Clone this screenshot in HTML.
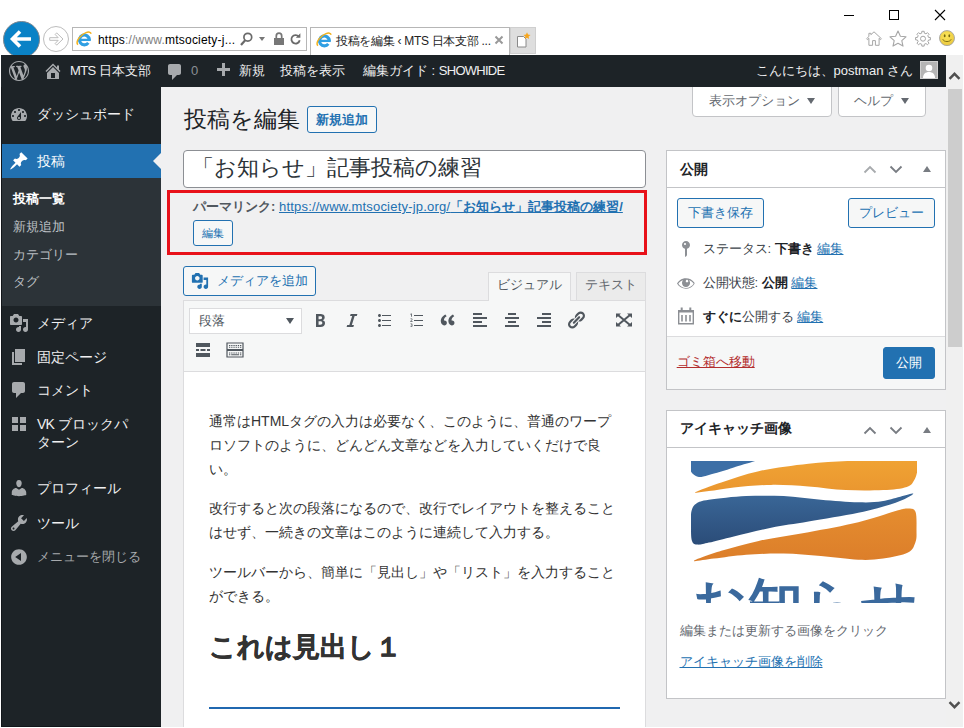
<!DOCTYPE html>
<html lang="ja">
<head>
<meta charset="utf-8">
<title>投稿を編集 ‹ MTS 日本支部</title>
<style>
*{box-sizing:border-box;margin:0;padding:0}
html,body{width:964px;height:728px;overflow:hidden;background:#fff}
body{position:relative;font-family:"Liberation Sans",sans-serif;font-size:13px;color:#3c434a}
.a{position:absolute;white-space:nowrap}
.t{position:absolute;white-space:nowrap;line-height:20px;height:20px}
svg{position:absolute;display:block;overflow:visible}
a,.lk{color:#2271b1;text-decoration:underline}
/* ---------- browser chrome ---------- */
#chrome{left:0;top:0;width:964px;height:55px;background:#fff}
/* ---------- admin bar ---------- */
#bar{left:1px;top:55px;width:945px;height:32px;background:#1d2327;color:#f0f0f1}
#bar .t{top:6px;font-size:13px;color:#f0f0f1}
/* ---------- sidebar ---------- */
#side{left:1px;top:87px;width:160px;height:640px;background:#1d2327;border-left:1px solid #12161a;border-bottom:1px solid #12161a}
#side .m{position:absolute;left:35px;font-size:14px;color:#f0f0f1;white-space:nowrap;line-height:20px}
#side .s{position:absolute;left:11px;font-size:13px;color:#bcc0c4;white-space:nowrap;line-height:20px}
#side svg{left:7px;width:20px;height:20px;fill:#a7aaad}
/* ---------- content ---------- */
#main{left:161px;top:87px;width:785px;height:640px;background:#f0f0f1;overflow:hidden}
.btn{position:absolute;border:1px solid #2271b1;border-radius:3px;background:#f6f7f7;color:#2271b1;font-size:13px;text-align:center;white-space:nowrap}
.box{position:absolute;background:#fff;border:1px solid #c3c4c7}
/* ---------- scrollbar ---------- */
#sb{left:946px;top:55px;width:17px;height:672px;background:#f0f0f0}
</style>
</head>
<body>
<!--CHROME-->
<div id="chrome" class="a">
<!-- back -->
<div class="a" style="left:2.500px;top:20.500px;width:37px;height:37px;border-radius:50%;background:#0a82c6;border:1px solid #7d8791"></div>
<svg style="left:9px;top:29px;width:24px;height:20px" viewBox="0 0 24 20"><path d="M22 10H4M11 2.500L3.500 10 11 17.500" fill="none" stroke="#fff" stroke-width="3.600"/></svg>
<!-- forward -->
<div class="a" style="left:43px;top:26px;width:26px;height:26px;border-radius:50%;background:#fff;border:1px solid #bdbdbd"></div>
<svg style="left:49px;top:32px;width:15px;height:14px" viewBox="0 0 15 14"><path d="M.700 5.700h8.500L6.200 2.500l1.500-1.600L14 7l-6.300 6.100-1.500-1.600 3-3.200H.700z" fill="#fff" stroke="#bdbdbd" stroke-width="1"/></svg>
<!-- address bar -->
<div class="a" style="left:72px;top:27px;width:235px;height:24px;border:1px solid #b6b6b6;background:#fff"></div>
<svg style="left:76px;top:31px;width:16px;height:16px" viewBox="0 0 16 16"><g><path d="M13.300 8.700A4.900 4.900 0 1 0 12.300 11.900" fill="none" stroke="#2f9fe3" stroke-width="3.100"/><path d="M4.500 8.900H14.800" stroke="#2f9fe3" stroke-width="2.300"/><path d="M1.800 13.800C-.800 10.400 4.500 3.600 10 1.600c2.700-1 4.700-.500 5.100 1.100" fill="none" stroke="#f2b21f" stroke-width="1.500"/></g></svg>
<div class="a" style="left:98px;top:32px;font-size:12px;line-height:16px;color:#000;letter-spacing:0.2px">https<span style="color:#808080">://www.</span>mtsociety-j...</div>
<svg style="left:240px;top:32px;width:13px;height:14px" viewBox="0 0 13 14"><circle cx="7.800" cy="5.200" r="3.900" fill="none" stroke="#6a6a6a" stroke-width="1.700"/><path d="M5.200 8.200L1 13" stroke="#6a6a6a" stroke-width="2.200"/></svg>
<div class="a" style="left:259px;top:37px;width:0;height:0;border:3.500px solid transparent;border-top:4px solid #777"></div>
<svg style="left:274px;top:32px;width:10px;height:13px" viewBox="0 0 10 13"><rect x="0" y="6" width="10" height="7" fill="#777"/><path d="M2.300 6V3.900a2.700 2.700 0 0 1 5.400 0V6" fill="none" stroke="#777" stroke-width="1.700"/></svg>
<svg style="left:290px;top:32px;width:12px;height:13px" viewBox="0 0 12 13"><path d="M8.800 4.600A4.200 4.200 0 1 0 9.700 8.200" fill="none" stroke="#6a6a6a" stroke-width="1.800"/><path d="M10.400 1.200v4.600H5.800z" fill="#6a6a6a"/></svg>
<!-- tab -->
<div class="a" style="left:310px;top:27px;width:200px;height:28px;border:1px solid #b6b6b6;border-bottom:0;background:#fff"></div>
<svg style="left:316px;top:32px;width:16px;height:16px" viewBox="0 0 16 16"><g><path d="M13.300 8.700A4.900 4.900 0 1 0 12.300 11.900" fill="none" stroke="#2f9fe3" stroke-width="3.100"/><path d="M4.500 8.900H14.800" stroke="#2f9fe3" stroke-width="2.300"/><path d="M1.800 13.800C-.800 10.400 4.500 3.600 10 1.600c2.700-1 4.700-.500 5.100 1.100" fill="none" stroke="#f2b21f" stroke-width="1.500"/></g></svg>
<div class="a" style="left:336px;top:33px;font-size:12px;line-height:16px;color:#222;letter-spacing:-0.3px">投稿を編集 ‹ MTS 日本支部 ...</div>
<svg style="left:495px;top:36px;width:8px;height:8px" viewBox="0 0 8 8"><path d="M.500.500l7 7M7.500.500l-7 7" stroke="#999" stroke-width="2"/></svg>
<!-- new tab -->
<div class="a" style="left:509.500px;top:27px;width:26.500px;height:27px;background:#dedede;border:1px solid #cfcfcf"></div>
<svg style="left:516px;top:32px;width:15px;height:16px" viewBox="0 0 15 16"><path d="M1.500 4.500h6l2.500 2.500V15h-8.500z" fill="#fff" stroke="#8a8a8a" stroke-width="1"/><path d="M11 .300l1 2.300 2.500.300-1.900 1.700.500 2.500L11 5.800 8.900 7.100l.500-2.500-1.900-1.700 2.500-.300z" fill="#f7a51c"/></svg>
<!-- window controls -->
<div class="a" style="left:844px;top:15px;width:10px;height:1px;background:#000"></div>
<div class="a" style="left:889px;top:10px;width:10px;height:10px;border:1px solid #000"></div>
<svg style="left:935px;top:10px;width:10px;height:10px" viewBox="0 0 10 10"><path d="M0 0l10 10M10 0L0 10" stroke="#000" stroke-width="1.100"/></svg>
<!-- home / star / gear / smiley -->
<svg style="left:866px;top:31px;width:16px;height:15px" viewBox="0 0 16 15"><path d="M8 .800L15.400 7.700l-.900.900-1.400-1.300v7H9.400V9.600H6.600v4.700H2.900v-7L1.500 8.600l-.900-.900L2.900 5.500V2.300h2v1.400z" fill="#fff" stroke="#a6a6a6" stroke-width="1" stroke-linejoin="round"/></svg>
<svg style="left:889px;top:30px;width:18px;height:17px" viewBox="0 0 18 17"><path d="M9 1l2.400 5.200 5.600.600-4.200 3.800 1.200 5.500L9 13.300 4 16.100l1.200-5.500L1 6.800l5.600-.600z" fill="#fff" stroke="#a6a6a6" stroke-width="1.100" stroke-linejoin="round"/></svg>
<svg style="left:915px;top:30.500px;width:16px;height:16px" viewBox="0 0 16 16"><path d="M13.55 6.41L15.41 6.53L15.41 8.87L13.55 8.99L12.84 10.72L14.07 12.11L12.41 13.77L11.02 12.54L9.29 13.25L9.17 15.11L6.83 15.11L6.71 13.25L4.98 12.54L3.59 13.77L1.93 12.11L3.16 10.72L2.45 8.99L0.59 8.87L0.59 6.53L2.45 6.41L3.16 4.68L1.93 3.29L3.59 1.63L4.98 2.86L6.71 2.15L6.83 0.29L9.17 0.29L9.29 2.15L11.02 2.86L12.41 1.63L14.07 3.29L12.84 4.68Z" fill="#fff" stroke="#a6a6a6" stroke-width="1" stroke-linejoin="round"/><circle cx="8" cy="7.700" r="2.500" fill="#fff" stroke="#a6a6a6" stroke-width="1"/></svg>
<svg style="left:939px;top:30px;width:16px;height:16px" viewBox="0 0 16 16"><defs><radialGradient id="sm" cx=".45" cy=".35" r=".7"><stop offset="0" stop-color="#fbe65a"/><stop offset="1" stop-color="#e9c53c"/></radialGradient></defs><circle cx="8" cy="8.100" r="7.500" fill="url(#sm)" stroke="#a4a4a4" stroke-width=".900"/><ellipse cx="5.700" cy="5.700" rx=".900" ry="1.500" fill="#76680f"/><ellipse cx="10.300" cy="5.700" rx=".900" ry="1.500" fill="#76680f"/><path d="M3.800 9.300c1.200 3 7.200 3 8.400 0" fill="none" stroke="#76680f" stroke-width=".900"/></svg>
</div>
<!--BAR-->
<div id="bar" class="a">
<svg style="left:8px;top:6px;width:20px;height:20px;fill:#a7aaad" viewBox="0 0 20 20"><path d="M20 10c0-5.510-4.490-10-10-10C4.480 0 0 4.490 0 10c0 5.520 4.480 10 10 10 5.510 0 10-4.480 10-10zM7.780 15.370L4.370 6.220c.550-.020 1.170-.080 1.170-.080.500-.060.440-1.130-.060-1.110 0 0-1.450.110-2.370.110-.180 0-.370 0-.580-.010C4.120 2.690 6.870 1.110 10 1.110c2.330 0 4.450.870 6.050 2.340-.680-.110-1.650.390-1.650 1.580 0 .740.450 1.360.900 2.100.350.610.550 1.360.550 2.460 0 1.490-1.400 5-1.400 5l-3.030-8.370c.540-.020.820-.170.820-.170.500-.050.440-1.250-.060-1.220 0 0-1.440.120-2.380.120-.870 0-2.330-.120-2.330-.120-.500-.030-.560 1.200-.060 1.220l.920.080 1.260 3.410zM17.410 10c.240-.640.740-1.870.430-4.250.700 1.290 1.050 2.710 1.050 4.250 0 3.290-1.730 6.240-4.400 7.780.970-2.590 1.940-5.200 2.920-7.780zM6.100 18.090C3.120 16.650 1.110 13.530 1.110 10c0-1.300.230-2.480.720-3.590C3.250 10.300 4.670 14.200 6.100 18.090zm4.030-6.630l2.580 6.980c-.860.290-1.760.450-2.710.450-.790 0-1.570-.110-2.290-.330.810-2.380 1.620-4.740 2.420-7.100z"/></svg>
<svg style="left:42px;top:6px;width:20px;height:20px;fill:#a7aaad" viewBox="0 0 20 20"><path d="M16 8.500l1.530 1.530-1.060 1.060L10 4.620l-6.470 6.470-1.060-1.060L10 2.500l4 4v-2h2v4zm-6-2.460l6 5.990V18H4v-5.970zM12 17v-5H8v5h4z"/></svg>
<div class="t" style="left:69px"><span style="letter-spacing:-0.6px">MTS</span> 日本支部</div>
<svg style="left:164px;top:7px;width:20px;height:20px;fill:#a7aaad" viewBox="0 0 20 20"><path d="M5 2h9c1.100 0 2 .900 2 2v7c0 1.100-.900 2-2 2h-2l-5 5v-5H5c-1.100 0-2-.900-2-2V4c0-1.100.900-2 2-2z"/></svg>
<div class="t" style="left:190px;color:#8c8f94">0</div>
<svg style="left:212px;top:6px;width:20px;height:20px;fill:#a7aaad" viewBox="0 0 20 20"><path d="M17 7v3h-5v5H9v-5H4V7h5V2h3v5h5z"/></svg>
<div class="t" style="left:238px">新規</div>
<div class="t" style="left:279px">投稿を表示</div>
<div class="t" style="left:362px">編集ガイド : <span style="letter-spacing:-0.75px">SHOWHIDE</span></div>
<div class="t" style="right:33px">こんにちは、postman さん</div>
<div class="a" style="left:919px;top:6px;width:18px;height:18px;background:#b5b5b5;border:1px solid #d0d0d0;overflow:hidden">
<svg style="left:0;top:0;width:16px;height:16px;fill:#fff" viewBox="0 0 16 16"><circle cx="8" cy="6" r="3.3"/><path d="M2 16c0-4 2.500-6 6-6s6 2 6 6z"/></svg></div>
</div>
<!--SIDE-->
<div id="side" class="a">
<svg style="top:18px" viewBox="0 0 20 20"><path d="M3.76 16h12.48c1.1-1.37 1.76-3.11 1.76-5 0-4.42-3.58-8-8-8s-8 3.58-8 8c0 1.89.66 3.63 1.76 5zM10 4c.55 0 1 .45 1 1s-.45 1-1 1-1-.45-1-1 .45-1 1-1zM6 6c.55 0 1 .45 1 1s-.45 1-1 1-1-.45-1-1 .45-1 1-1zm8 0c.55 0 1 .45 1 1s-.45 1-1 1-1-.45-1-1 .45-1 1-1zm-5.37 5.55L12 7v6c0 1.1-.9 2-2 2s-2-.9-2-2c0-.57.24-1.08.63-1.45zM4 10c.55 0 1 .45 1 1s-.45 1-1 1-1-.45-1-1 .45-1 1-1zm12 0c.55 0 1 .45 1 1s-.45 1-1 1-1-.45-1-1 .45-1 1-1zm-5 3c0-.55-.45-1-1-1s-1 .45-1 1 .45 1 1 1 1-.45 1-1z"/></svg>
<div class="m" style="top:17px">ダッシュボード</div>
<div class="a" style="left:0;top:57px;width:159px;height:34px;background:#2271b1"></div>
<div class="a" style="left:151px;top:66px;width:0;height:0;border:8px solid transparent;border-right-color:#f0f0f1;border-left-width:0"></div>
<svg style="top:64px;fill:#fff" viewBox="0 0 20 20"><path d="M10.44 3.02l1.82-1.82 6.36 6.35-1.83 1.82c-1.05-.68-2.48-.57-3.41.36l-.75.75c-.92.93-1.04 2.35-.35 3.41l-1.83 1.82-2.41-2.41-2.8 2.79c-.42.42-3.38 2.71-3.8 2.29s1.86-3.39 2.28-3.81l2.79-2.79L4.1 9.36l1.83-1.82c1.05.69 2.48.57 3.4-.36l.75-.75c.93-.92 1.05-2.35.36-3.41z"/></svg>
<div class="m" style="top:64px;color:#fff">投稿</div>
<div class="a" style="left:0;top:91px;width:159px;height:128px;background:#2c3338"></div>
<div class="s" style="top:102px;color:#fff;font-weight:bold">投稿一覧</div>
<div class="s" style="top:130px">新規追加</div>
<div class="s" style="top:158px">カテゴリー</div>
<div class="s" style="top:185px">タグ</div>
<svg style="top:226px" viewBox="0 0 20 20"><path d="M13 11V4c0-.55-.45-1-1-1h-1.670L9 1H5L3.670 3H2c-.550 0-1 .450-1 1v7c0 .550.450 1 1 1h10c.550 0 1-.450 1-1zM7 4.500c1.380 0 2.500 1.120 2.500 2.500S8.380 9.500 7 9.500 4.500 8.380 4.500 7 5.620 4.500 7 4.500zM14 6h5v10.500c0 1.380-1.120 2.500-2.500 2.500S14 17.880 14 16.500s1.120-2.500 2.500-2.500c.170 0 .340.020.500.050V9h-3V6zm-4 8.050V13h2v3.500c0 1.380-1.120 2.500-2.500 2.500S7 17.880 7 16.500 8.120 14 9.500 14c.170 0 .340.020.500.050z"/></svg>
<div class="m" style="top:226px">メディア</div>
<svg style="top:260px" viewBox="0 0 20 20"><path d="M6 15V2h10v13H6zm-1 1h8v2H3V5h2v11z"/></svg>
<div class="m" style="top:260px">固定ページ</div>
<svg style="top:293px" viewBox="0 0 20 20"><path d="M5 2h9c1.100 0 2 .900 2 2v7c0 1.100-.900 2-2 2h-2l-5 5v-5H5c-1.100 0-2-.900-2-2V4c0-1.100.900-2 2-2z"/></svg>
<div class="m" style="top:293px">コメント</div>
<svg style="top:327px" viewBox="0 0 20 20"><path d="M3 3h6v6H3zM11 3h6v6h-6zM3 11h6v6H3zM11 11h6v6h-6z"/></svg>
<div class="m" style="top:327px"><span style="letter-spacing:-0.8px">VK</span> ブロックパ</div>
<div class="m" style="top:345px">ターン</div>
<svg style="top:391px" viewBox="0 0 20 20"><path d="M10 9.250c-2.270 0-2.730-3.440-2.730-3.440C7 4.020 7.820 2 9.970 2c2.160 0 2.980 2.020 2.710 3.810 0 0-.410 3.440-2.680 3.440zm0 2.570L12.720 10c2.390 0 4.520 2.330 4.520 4.530v2.490s-3.650 1.130-7.240 1.130c-3.650 0-7.240-1.130-7.240-1.130v-2.490c0-2.250 1.940-4.480 4.470-4.480z"/></svg>
<div class="m" style="top:391px">プロフィール</div>
<svg style="top:426px" viewBox="0 0 20 20"><path d="M16.680 9.770c-1.340 1.340-3.300 1.670-4.950.990l-5.410 6.520c-.990.990-2.590.990-3.580 0s-.990-2.590 0-3.570l6.520-5.420c-.680-1.650-.350-3.610.990-4.950 1.280-1.280 3.120-1.620 4.720-1.060l-2.890 2.890 2.820 2.820 2.860-2.870c.530 1.580.180 3.390-1.080 4.650zM3.810 16.210c.400.390 1.040.390 1.430 0 .400-.400.400-1.040 0-1.430-.390-.400-1.030-.400-1.430 0-.390.390-.390 1.030 0 1.430z"/></svg>
<div class="m" style="top:426px">ツール</div>
<svg style="top:460px" viewBox="0 0 20 20"><path d="M10 2.160c4.330 0 7.840 3.510 7.840 7.840s-3.510 7.840-7.840 7.840S2.160 14.330 2.160 10 5.670 2.160 10 2.160zm2 11.720V6.120L6.180 9.970z"/></svg>
<div class="m" style="top:460px;font-size:13px;color:#a7aaad">メニューを閉じる</div>
</div>
<!--MAIN-->
<div id="main" class="a">
<!-- screen meta -->
<div class="a" style="left:531px;top:-1px;width:140px;height:30.500px;background:#fff;border:1px solid #c3c4c7;border-radius:0 0 4px 4px"></div>
<div class="t" style="left:548px;top:4px;color:#646970">表示オプション</div>
<div class="a" style="left:646px;top:11px;width:0;height:0;border:4.500px solid transparent;border-top:6px solid #646970"></div>
<div class="a" style="left:677px;top:-1px;width:88px;height:30.500px;background:#fff;border:1px solid #c3c4c7;border-radius:0 0 4px 4px"></div>
<div class="t" style="left:693px;top:4px;color:#646970">ヘルプ</div>
<div class="a" style="left:740px;top:11px;width:0;height:0;border:4.500px solid transparent;border-top:6px solid #646970"></div>
<!-- heading -->
<div class="a" style="left:22.500px;top:17px;font-size:23px;line-height:30px;color:#1d2327">投稿を編集</div>
<div class="btn" style="left:146px;top:19px;width:70px;height:27px;line-height:25px;font-weight:bold">新規追加</div>
<!-- title -->
<div class="a" style="left:22px;top:63px;width:463px;height:38px;background:#fff;border:1px solid #8c8f94;border-radius:4px"></div>
<div class="a" style="left:31px;top:65px;font-size:22px;line-height:32px;color:#2c3338">「お知らせ」記事投稿の練習</div>
<!-- red box -->
<div class="a" style="left:6px;top:103px;width:480px;height:65px;border:3px solid #e8111a"></div>
<div class="t" style="left:32px;top:110px;color:#50575e"><b>パーマリンク:</b> <span class="lk"><span style="letter-spacing:.2px">https://www.mtsociety-jp.org/</span><b>「お知らせ」記事投稿の練習/</b></span></div>
<div class="btn" style="left:32px;top:133px;width:40px;height:26px;line-height:24px;font-size:11px">編集</div>
<!-- media button -->
<div class="btn" style="left:22px;top:179px;width:133px;height:30px"></div>
<svg style="left:30px;top:185px;width:18px;height:18px;fill:#2271b1" viewBox="0 0 20 20"><path d="M13 11V4c0-.55-.45-1-1-1h-1.670L9 1H5L3.670 3H2c-.550 0-1 .450-1 1v7c0 .550.450 1 1 1h10c.550 0 1-.450 1-1zM7 4.500c1.380 0 2.500 1.120 2.500 2.500S8.380 9.500 7 9.500 4.500 8.380 4.500 7 5.620 4.500 7 4.500zM14 6h5v10.500c0 1.380-1.120 2.500-2.500 2.500S14 17.880 14 16.500s1.120-2.500 2.500-2.500c.170 0 .340.020.500.050V9h-3V6zm-4 8.050V13h2v3.500c0 1.380-1.120 2.500-2.500 2.500S7 17.880 7 16.500 8.120 14 9.500 14c.170 0 .340.020.500.050z"/></svg>
<div class="t" style="left:56px;top:184px;color:#2271b1">メディアを追加</div>
<!-- tabs -->
<div class="a" style="left:415px;top:185px;width:70px;height:29px;background:#ebebeb;border:1px solid #dcdcde"></div>
<div class="t" style="left:424px;top:188px;color:#646970">テキスト</div>
<!-- editor -->
<div class="a" style="left:22px;top:213px;width:463px;height:440px;background:#fff;border:1px solid #dcdcde"></div>
<div class="a" style="left:23px;top:214px;width:461px;height:71px;background:#f6f7f7;border-bottom:1px solid #dcdcde"></div>
<div class="a" style="left:327px;top:185px;width:83px;height:29px;background:#f6f7f7;border:1px solid #dcdcde;border-bottom:0"></div>
<div class="t" style="left:336px;top:188px;color:#50575e">ビジュアル</div>
<div class="a" style="left:28px;top:221px;width:113px;height:26px;background:#fff;border:1px solid #dcdcde"></div>
<div class="t" style="left:38px;top:224px;color:#50575e">段落</div>
<div class="a" style="left:125px;top:231px;width:0;height:0;border:4.500px solid transparent;border-top:6px solid #50575e"></div>
<svg style="left:149px;top:223px;width:20px;height:20px;fill:#50575e" viewBox="0 0 20 20"><path d="M6 4v13h4.540c1.370 0 2.460-.330 3.260-1 .800-.660 1.200-1.580 1.200-2.770 0-.840-.170-1.510-.510-2.010s-.900-.850-1.670-1.030v-.090c.570-.100 1.020-.400 1.360-.900s.510-1.130.510-1.910c0-1.140-.390-1.980-1.170-2.500C12.750 4.260 11.500 4 9.780 4H6zm2.570 5.150V6.260h1.360c.730 0 1.270.110 1.610.320.340.220.510.580.510 1.070 0 .540-.160.920-.470 1.150s-.820.350-1.510.350h-1.500zm0 2.190h1.600c1.440 0 2.160.530 2.160 1.610 0 .600-.170 1.050-.510 1.340s-.860.430-1.570.430H8.570v-3.380z"/></svg>
<svg style="left:181px;top:223px;width:20px;height:20px;fill:#50575e" viewBox="0 0 20 20"><path d="M14.780 6h-2.130l-2.800 9h2.120l-.620 2H4.600l.620-2h2.140l2.800-9H8.030l.620-2h6.750z"/></svg>
<svg style="left:213px;top:223px;width:20px;height:20px;fill:#50575e" viewBox="0 0 20 20"><path d="M5.500 7C4.670 7 4 6.330 4 5.500 4 4.680 4.670 4 5.500 4 6.320 4 7 4.680 7 5.500 7 6.330 6.320 7 5.500 7zM8 5h9v1H8V5zm-2.500 7c-.830 0-1.500-.670-1.500-1.500C4 9.680 4.670 9 5.500 9c.820 0 1.500.680 1.500 1.500 0 .830-.680 1.500-1.500 1.500zM8 10h9v1H8v-1zm-2.500 7c-.830 0-1.500-.670-1.500-1.500 0-.820.670-1.500 1.500-1.500.820 0 1.500.680 1.500 1.500 0 .830-.680 1.500-1.500 1.500zM8 15h9v1H8v-1z"/></svg>
<svg style="left:245px;top:223px;width:20px;height:20px;fill:#50575e" viewBox="0 0 20 20"><path d="M8 5h9v1H8zM8 10h9v1H8zM8 15h9v1H8z"/><path d="M5 3.500h.8v3.300H5V4.500l-.6.200V4zM4.300 8.800c.3-.3.700-.4 1.100-.4.700 0 1.100.4 1.100.9 0 .600-.500 1-1.300 1.700h1.400v.700H4.200v-.600c.900-.800 1.500-1.300 1.500-1.700 0-.200-.100-.400-.400-.400-.200 0-.400.100-.600.300zM4.300 13.800c.3-.200.700-.400 1.100-.400.700 0 1.100.300 1.100.800 0 .400-.200.600-.500.700.400.100.600.400.600.800 0 .600-.500 1-1.300 1-.400 0-.900-.100-1.100-.400l.300-.500c.200.200.500.300.800.300s.500-.100.500-.400c0-.300-.200-.400-.700-.400h-.200v-.600h.200c.400 0 .600-.100.600-.400 0-.200-.200-.300-.400-.300-.300 0-.500.100-.700.300z"/></svg>
<svg style="left:277px;top:223px;width:20px;height:20px;fill:#50575e" viewBox="0 0 20 20"><path d="M8.540 12.740c0-.870-.240-1.610-.720-2.220-.730-.920-2.140-1.030-2.960-.850-.340-1.930 1.300-4.390 3.420-5.450L6.650 1.940C3.450 3.460.310 6.960.850 11.370 1.190 14.160 2.950 16 5.120 16c.950 0 1.760-.310 2.420-.930s1-1.390 1-2.330zm9.730 0c0-.870-.240-1.610-.720-2.220-.730-.920-2.140-1.030-2.960-.850-.340-1.930 1.300-4.390 3.420-5.450l-1.630-2.280c-3.200 1.520-6.340 5.020-5.800 9.430.340 2.790 2.100 4.630 4.270 4.630.950 0 1.760-.310 2.420-.930s1-1.390 1-2.330z" transform="translate(2.200 3) scale(.78)"/></svg>
<svg style="left:309px;top:223px;width:20px;height:20px;fill:#50575e" viewBox="0 0 20 20"><path d="M12 5V3H3v2h9zm5 4V7H3v2h14zm-5 4v-2H3v2h9zm5 4v-2H3v2h14z"/></svg>
<svg style="left:341px;top:223px;width:20px;height:20px;fill:#50575e" viewBox="0 0 20 20"><path d="M14 5V3H6v2h8zm3 4V7H3v2h14zm-3 4v-2H6v2h8zm3 4v-2H3v2h14z"/></svg>
<svg style="left:373px;top:223px;width:20px;height:20px;fill:#50575e" viewBox="0 0 20 20"><path d="M17 5V3H8v2h9zm0 4V7H3v2h14zm0 4v-2H8v2h9zm0 4v-2H3v2h14z"/></svg>
<svg style="left:405px;top:223px;width:20px;height:20px;fill:#50575e" viewBox="0 0 20 20"><path d="M17.740 2.760c1.680 1.690 1.680 4.410 0 6.100l-1.530 1.520c-1.120 1.120-2.700 1.470-4.140 1.090l2.620-2.610.760-.770.760-.760c.840-.840.840-2.200 0-3.040-.840-.850-2.200-.850-3.040 0l-.770.760-3.380 3.380c-.370-1.440-.020-3.020 1.100-4.140l1.520-1.530c1.690-1.680 4.420-1.680 6.100 0zM8.590 13.430l5.340-5.340c.420-.420.420-1.100 0-1.520-.440-.430-1.130-.390-1.530 0l-5.330 5.340c-.420.420-.420 1.100 0 1.520.440.430 1.130.390 1.520 0zm-.760 2.290l4.140-4.150c.380 1.440.030 3.020-1.090 4.140l-1.520 1.530c-1.690 1.680-4.410 1.680-6.100 0-1.680-1.680-1.680-4.420 0-6.100l1.530-1.520c1.120-1.120 2.700-1.470 4.140-1.100l-4.140 4.150c-.850.840-.850 2.200 0 3.050.840.840 2.200.840 3.040 0z"/></svg>
<svg style="left:453px;top:223px;width:20px;height:20px;fill:#50575e" viewBox="0 0 20 20"><path d="M4 5l12 10M16 5L4 15" fill="none" stroke="#50575e" stroke-width="2"/><path d="M2 3.500h5L2 8zM18 3.500h-5l5 4.500zM2 16.500h5L2 12zM18 16.500h-5l5-4.500z"/></svg>
<svg style="left:32px;top:253px;width:20px;height:20px;fill:#50575e" viewBox="0 0 20 20"><path d="M3 3h14v4H3zM3 9h3v2H3zM7.500 9h5v2h-5zM14 9h3v2h-3zM3 13h14v4H3z"/></svg>
<svg style="left:64px;top:253px;width:20px;height:20px;fill:#50575e" viewBox="0 0 20 20"><path d="M2 3h16v6.500H2zM2 10.500h16V17H2z" fill="none" stroke="#50575e" stroke-width="1.200"/><path d="M4 5h1.300v1H4zM6.200 5h1.300v1H6.200zM8.400 5h1.300v1H8.400zM10.600 5h1.300v1h-1.300zM12.800 5h1.300v1h-1.300zM15 5h1.300v1H15zM4 6.800h1.300v1H4zM6.200 6.800h1.300v1H6.200zM8.400 6.800h1.300v1H8.400zM10.600 6.800h1.300v1h-1.300zM12.800 6.800h1.300v1h-1.300zM15 6.800h1.300v1H15zM4 12.500h1.300v1H4zM6.200 12.500h1.300v1H6.200zM8.400 12.500h1.300v1H8.400zM10.600 12.500h1.300v1h-1.300zM12.800 12.500h1.300v1h-1.300zM15 12.500h1.300v1H15zM4 14.300h1.300v1H4zM6.200 14.300h7.900v1H6.200zM15 14.300h1.300v1H15z"/></svg>

<div class="a" style="left:48px;top:323px;font-size:14px;line-height:23.800px;color:#333">通常はHTMLタグの入力は必要なく、このように、普通のワープ<br>ロソフトのように、どんどん文章などを入力していくだけで良<br>い。</div>
<div class="a" style="left:48px;top:410px;font-size:14px;line-height:23.800px;color:#333">改行すると次の段落になるので、改行でレイアウトを整えること<br>はせず、一続きの文章はこのように連続して入力する。</div>
<div class="a" style="left:48px;top:474px;font-size:14px;line-height:23.800px;color:#333">ツールバーから、簡単に「見出し」や「リスト」を入力すること<br>ができる。</div>
<div class="a" style="left:48px;top:540px;font-size:27.400px;line-height:40px;font-weight:bold;color:#333;-webkit-text-stroke:.5px #333">これは見出し１</div>
<div class="a" style="left:48px;top:620px;width:411px;height:2px;background:#2068b0"></div>

<div class="box" style="left:505px;top:63px;width:280px;height:240px"></div>
<div class="a" style="left:506px;top:100px;width:278px;height:1px;background:#c3c4c7"></div>
<div class="t" style="left:518.5px;top:71.5px;font-size:14px;font-weight:bold;color:#1d2327">公開</div>
<svg style="left:702.3px;top:78px;width:14px;height:9px" viewBox="0 0 14 9"><path d="M1.500 7.500L7 2l5.500 5.500" fill="none" stroke="#a7aaad" stroke-width="1.800"/></svg>
<svg style="left:728px;top:78px;width:14px;height:9px" viewBox="0 0 14 9"><path d="M1.500 1.500L7 7l5.500-5.500" fill="none" stroke="#787c82" stroke-width="1.800"/></svg>
<div class="a" style="left:762.4px;top:79px;width:0;height:0;border:4px solid transparent;border-bottom:6px solid #787c82;border-top:0"></div>
<div class="btn" style="left:516px;top:111px;width:87px;height:30px;line-height:28px">下書き保存</div>
<div class="btn" style="left:687px;top:111px;width:87px;height:30px;line-height:28px">プレビュー</div>
<svg style="left:515px;top:152px;width:20px;height:20px;fill:#8c8f94" viewBox="0 0 20 20"><path d="M14 6c0 1.860-1.280 3.410-3 3.860V16c0 1-2 2-2 2V9.860c-1.720-.450-3-2-3-3.860 0-2.210 1.790-4 4-4s4 1.790 4 4zM8 5c0 .550.450 1 1 1s1-.450 1-1-.450-1-1-1-1 .450-1 1z"/></svg>
<div class="t" style="left:541.6px;top:151.5px">ステータス: <b style="color:#1d2327">下書き</b> <span class="lk">編集</span></div>
<svg style="left:515px;top:185.5px;width:20px;height:20px;fill:#8c8f94" viewBox="0 0 20 20"><path d="M18.300 9.500C15 4.900 8.500 3.800 3.900 7.200c-1.200.900-2.200 2.100-2.900 3.400 2.800 4.900 8.900 6.600 13.700 3.900 1.600-.900 3-2.300 3.900-3.900-.100-.400-.200-.700-.300-1.100zM10.100 7.200c.500-.500 1.300-.500 1.800 0s.500 1.300 0 1.800-1.300.500-1.800 0-.500-1.300 0-1.800zm-.100 7.700c-3.100 0-6-1.600-7.700-4.200C3.500 9 5.100 7.800 7 7.200c-.700.800-1 1.700-1 2.700 0 2.200 1.700 4.100 4 4.100 2.200 0 4.100-1.700 4.100-4v-.100c0-1-.400-2-1.100-2.700 1.900.600 3.500 1.800 4.700 3.500-1.700 2.600-4.600 4.200-7.700 4.200z"/></svg>
<div class="t" style="left:541.6px;top:185.5px">公開状態: <b style="color:#1d2327">公開</b> <span class="lk">編集</span></div>
<svg style="left:515px;top:218.5px;width:20px;height:20px" viewBox="0 0 20 20"><path d="M2.700 4.700h14.600v13.100H2.700z" fill="none" stroke="#8c8f94" stroke-width="1.400"/><path d="M2.700 4.500h14.600v2H2.700z" fill="#8c8f94"/><path d="M5.700 1.500v4M14.300 1.500v4" fill="none" stroke="#8c8f94" stroke-width="2"/><path d="M6 9v6.500M10 9v6.500M14 9v6.500" fill="none" stroke="#8c8f94" stroke-width="1.600"/></svg>
<div class="t" style="left:541.6px;top:219.5px"><b style="color:#1d2327">すぐに</b>公開する <span class="lk">編集</span></div>
<div class="a" style="left:506px;top:249px;width:278px;height:53px;background:#f6f7f7;border-top:1px solid #dcdcde"></div>
<div class="t" style="left:515.7px;top:264.5px;color:#b32d2e;text-decoration:underline">ゴミ箱へ移動</div>
<div class="btn" style="left:722px;top:260.4px;width:52px;height:32px;line-height:30px;background:#2271b1;color:#fff">公開</div>
<div class="box" style="left:505px;top:323px;width:280px;height:289px"></div>
<div class="a" style="left:506px;top:360px;width:278px;height:1px;background:#c3c4c7"></div>
<div class="t" style="left:518.5px;top:331.4px;font-size:14px;font-weight:bold;color:#1d2327">アイキャッチ画像</div>
<svg style="left:702.3px;top:338.5px;width:14px;height:9px" viewBox="0 0 14 9"><path d="M1.500 7.500L7 2l5.500 5.500" fill="none" stroke="#787c82" stroke-width="1.800"/></svg>
<svg style="left:728px;top:338.5px;width:14px;height:9px" viewBox="0 0 14 9"><path d="M1.500 1.500L7 7l5.500-5.500" fill="none" stroke="#787c82" stroke-width="1.800"/></svg>
<div class="a" style="left:762.4px;top:339.5px;width:0;height:0;border:4px solid transparent;border-bottom:6px solid #787c82;border-top:0"></div>
<svg style="left:530px;top:374px;width:226px;height:142px;overflow:hidden" viewBox="0 0 226 142"><defs>
<linearGradient id="gb" x1="0" y1="0" x2="0" y2="1"><stop offset="0" stop-color="#3a6798"/><stop offset="1" stop-color="#2b4c78"/></linearGradient>
<linearGradient id="go1" x1="0" y1="0" x2="0" y2="1"><stop offset="0" stop-color="#f0a334"/><stop offset="1" stop-color="#ea962f"/></linearGradient>
<linearGradient id="go2" x1="0" y1="0" x2="0" y2="1"><stop offset="0" stop-color="#e58d2f"/><stop offset="1" stop-color="#dc7e2a"/></linearGradient></defs>
<rect width="226" height="142" fill="#fff"/>
<path d="M-2.0 -3.5C9.5 -5.2 60.2 -5.2 67.7 -3.5C75.2 -1.9 51.1 3.5 42.8 6.4C34.5 9.4 23.7 12.3 17.9 13.9C12.1 15.5 10.6 16.1 7.9 15.9C5.2 15.7 3.3 14.2 1.7 12.7C0.1 11.1 -0.9 9.1 -1.5 6.4C-2.1 3.8 -13.6 -1.9 -2.0 -3.5Z" fill="#3d6fa6"/>
<path d="M4.2 31.3C6.3 29.9 19.8 24.9 30.3 21.4C40.9 17.9 53.2 13.3 67.7 10.2C82.2 7.1 100.9 4.5 117.5 2.7C134.1 0.9 152.3 0.2 167.3 -0.5C182.2 -1.2 197.1 -1.5 207.1 -1.5C217.0 -1.5 223.8 -2.3 227.0 -0.5C230.2 1.2 227.1 5.7 226.5 8.9C225.9 12.2 225.1 16.1 223.3 18.9C221.5 21.7 221.0 24.2 215.8 25.9C210.6 27.6 202.3 28.6 192.2 29.1C182.0 29.6 167.3 29.7 154.8 29.1C142.4 28.5 129.9 26.2 117.5 25.4C105.0 24.5 92.6 23.7 80.1 23.9C67.7 24.0 53.2 25.3 42.8 26.4C32.4 27.4 24.3 29.3 17.9 30.1C11.5 30.9 2.1 32.8 4.2 31.3Z" fill="url(#go1)"/>
<path d="M-0.0 63.7C-0.1 58.7 -0.4 53.5 0.5 50.0C1.4 46.5 2.5 44.4 5.4 42.5C8.4 40.7 9.6 40.1 17.9 38.8C26.2 37.6 42.8 35.7 55.2 35.1C67.7 34.5 80.1 34.5 92.6 35.1C105.0 35.7 117.5 37.8 129.9 38.8C142.4 39.8 156.9 41.1 167.3 41.3C177.6 41.5 183.0 41.5 192.2 40.1C201.3 38.6 220.0 32.3 222.0 32.6C224.1 32.9 213.7 38.6 204.6 41.8C195.5 45.0 181.8 48.6 167.3 51.8C152.7 54.9 132.0 58.0 117.5 60.5C102.9 63.0 92.6 64.2 80.1 66.7C67.7 69.2 53.2 72.9 42.8 75.4C32.4 77.9 23.9 80.3 17.9 81.6C11.9 83.0 9.5 83.9 6.7 83.6C3.9 83.3 2.1 83.2 1.0 79.9C-0.2 76.6 0.1 68.7 -0.0 63.7Z" fill="url(#gb)"/>
<path d="M3.0 99.8C4.2 98.5 19.6 93.2 30.3 89.8C41.1 86.5 53.2 83.0 67.7 79.9C82.2 76.8 100.9 74.3 117.5 71.2C134.1 68.1 152.7 64.7 167.3 61.2C181.8 57.7 196.3 52.3 204.6 50.0C212.9 47.7 213.7 47.4 217.0 47.5C220.4 47.6 223.1 47.2 224.5 50.8C225.9 54.3 225.5 63.6 225.5 68.7C225.5 73.7 225.9 77.3 224.5 81.1C223.1 84.9 222.4 88.8 217.0 91.6C211.7 94.3 200.5 96.4 192.2 97.6C183.9 98.8 177.6 99.2 167.3 98.8C156.9 98.4 142.4 96.1 129.9 95.1C117.5 94.0 105.0 92.8 92.6 92.6C80.1 92.4 66.9 93.0 55.2 93.8C43.6 94.7 31.6 96.6 22.9 97.6C14.2 98.6 1.7 101.1 3.0 99.8Z" fill="url(#go2)"/>
<text x="0" y="162" font-family="Liberation Sans, sans-serif" font-size="55" font-weight="bold" fill="#3a699d" textLength="226" lengthAdjust="spacing">お知らせ</text>
</svg>
<div class="t" style="left:518.5px;top:533.5px;color:#646970">編集または更新する画像をクリック</div>
<div class="t lk" style="left:518.5px;top:565.4px">アイキャッチ画像を削除</div>

</div>
<!--SB-->
<div id="sb" class="a">
<div class="a" style="left:1.500px;top:34px;width:14.500px;height:258px;background:#cdcdcd"></div>
<svg style="left:3px;top:17px;width:11px;height:8px" viewBox="0 0 11 8"><path d="M.500 6.800L5.500 1.800l5 5" fill="none" stroke="#505050" stroke-width="2.400"/></svg>
<svg style="left:3px;top:646px;width:11px;height:8px" viewBox="0 0 11 8"><path d="M.500 1.200l5 5 5-5" fill="none" stroke="#505050" stroke-width="2.400"/></svg>
</div>
</body>
</html>
